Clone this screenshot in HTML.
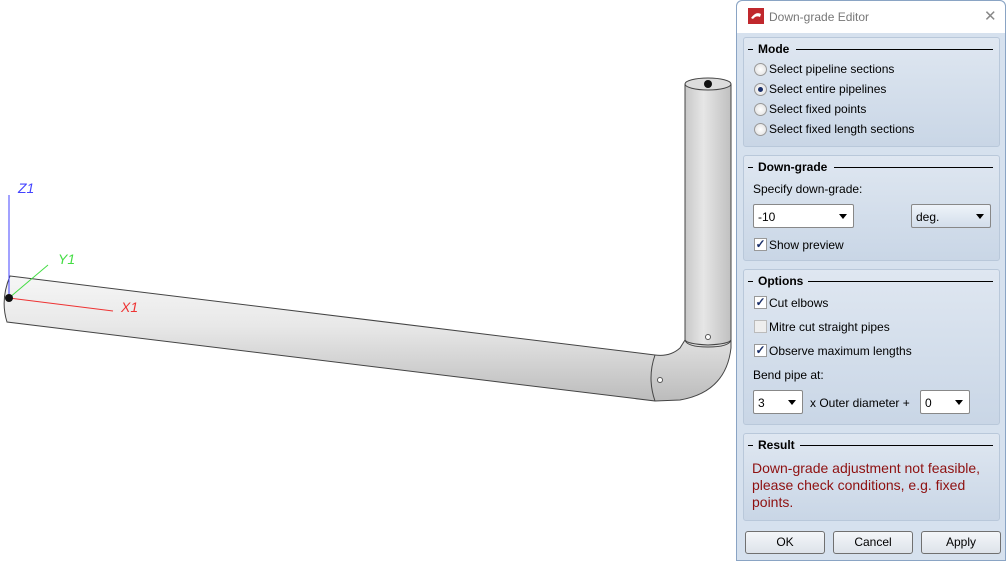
<!DOCTYPE html>
<html><head><style>
*{margin:0;padding:0;box-sizing:border-box}
body{width:1006px;height:561px;background:#fff;font-family:"Liberation Sans",sans-serif;font-size:12px;color:#000;position:relative;overflow:hidden}
.dlg{position:absolute;left:736px;top:0;width:270px;height:561px;background:#d6e1ee;border:1px solid #8aa4c4;border-radius:6px 6px 0 0}
.title{position:absolute;left:0;top:0;width:268px;height:32px;background:#fff;border-radius:6px 6px 0 0}
.title span{position:absolute;left:32px;top:9px;color:#777;font-size:12px}
.grp{position:absolute;left:6px;width:257px;background:linear-gradient(#dfe7f1,#c9d6e6);border:1px solid #b9c8da;border-radius:3px}
.hd{position:absolute;left:4px;top:4px;right:6px;height:14px;font-weight:bold}
.hd:before{content:"";position:absolute;left:0;top:7px;width:5px;border-top:1px solid #000}
.hd b{position:absolute;left:10px;top:0}
.hd i{position:absolute;top:7px;right:0;border-top:1px solid #000}
.t{position:absolute;white-space:nowrap}
.rb{position:absolute;width:13px;height:13px;border-radius:50%;border:1px solid #999;background:radial-gradient(#fff,#ddd)}
.rb.on:after{content:"";position:absolute;left:3px;top:3px;width:5px;height:5px;border-radius:50%;background:#1a2f6a}
.cb{position:absolute;width:13px;height:13px;border:1px solid #999;background:#fff;font-size:12px;line-height:11px;text-align:center;color:#1a2f6a;font-weight:bold}
.sel{position:absolute;height:24px;background:#fff;border:1px solid #888;border-radius:2px}
.sel span{position:absolute;left:4px;top:5px}
.sel:after{content:"";position:absolute;right:6px;top:9px;border:4px solid transparent;border-top:5px solid #000}
.btn{position:absolute;top:530px;width:80px;height:23px;border:1px solid #707070;border-radius:3px;background:linear-gradient(#f4f6f9,#dde3ea);text-align:center;line-height:21px}
</style></head><body>
<svg width="736" height="561" style="position:absolute;left:0;top:0">
<defs>
<linearGradient id="h" x1="0" y1="0" x2="0" y2="1"><stop offset="0" stop-color="#f6f6f6"/><stop offset=".4" stop-color="#e8e8e8"/><stop offset="1" stop-color="#bcbcbc"/></linearGradient>
<linearGradient id="v" x1="0" y1="0" x2="1" y2="0"><stop offset="0" stop-color="#c8c8c8"/><stop offset=".4" stop-color="#e6e6e6"/><stop offset="1" stop-color="#c0c0c0"/></linearGradient>
</defs>
<path d="M10 276 L655 355 Q670 357 680 348 L685 340 L731 340 L731 348 Q726 392 680 400 L655 401 L7 322 Q0 300 10 276 Z" fill="url(#h)" stroke="#444" stroke-width="1"/>
<path d="M685 84 L685 340 Q687 344 708 345 Q729 344 731 340 L731 84 Z" fill="url(#v)" stroke="#444"/>
<path d="M685 340 Q687 347 708 347 Q729 347 731 340" fill="none" stroke="#444"/>
<path d="M655 355 Q647 378 655 401" fill="none" stroke="#444"/>
<ellipse cx="708" cy="84" rx="23" ry="6" fill="#ddd" stroke="#444"/>
<circle cx="708" cy="84" r="4" fill="#111"/>
<circle cx="708" cy="337" r="2.5" fill="#fff" stroke="#555"/>
<circle cx="660" cy="380" r="2.5" fill="#fff" stroke="#555"/>
<line x1="9" y1="195" x2="9" y2="298" stroke="#4444ff"/>
<line x1="9" y1="298" x2="48" y2="265" stroke="#44dd44"/>
<line x1="9" y1="298" x2="113" y2="311" stroke="#ee3333"/>
<circle cx="9" cy="298" r="4" fill="#111"/>
<text x="18" y="193" fill="#4444ff" font-style="italic" font-size="14" font-family="Liberation Sans">Z1</text>
<text x="58" y="264" fill="#44dd44" font-style="italic" font-size="14" font-family="Liberation Sans">Y1</text>
<text x="121" y="312" fill="#ee3333" font-style="italic" font-size="14" font-family="Liberation Sans">X1</text>
</svg>
<div class="dlg">
<div class="title"><svg width="16" height="16" style="position:absolute;left:11px;top:7px"><rect width="16" height="16" fill="#c0282d"/><path d="M3 10 Q8 3 13 6 L12 9 Q8 7 5 11Z" fill="#fff"/></svg><span>Down-grade Editor</span><span style="left:247px;top:6px;font-size:15px;color:#888">✕</span></div>
<div class="grp" style="top:36px;height:110px"><div class="hd"><b>Mode</b><i style="left:48px"></i></div>
<div class="rb" style="left:10px;top:25px"></div><div class="t" style="left:25px;top:24px">Select pipeline sections</div>
<div class="rb on" style="left:10px;top:45px"></div><div class="t" style="left:25px;top:44px">Select entire pipelines</div>
<div class="rb" style="left:10px;top:65px"></div><div class="t" style="left:25px;top:64px">Select fixed points</div>
<div class="rb" style="left:10px;top:85px"></div><div class="t" style="left:25px;top:84px">Select fixed length sections</div></div>
<div class="grp" style="top:154px;height:106px"><div class="hd"><b>Down-grade</b><i style="left:86px"></i></div>
<div class="t" style="left:9px;top:26px">Specify down-grade:</div>
<div class="sel" style="left:9px;top:48px;width:101px"><span>-10</span></div>
<div class="sel" style="left:167px;top:48px;width:80px;background:linear-gradient(#eef3f9,#d3deeb)"><span>deg.</span></div>
<div class="cb" style="left:10px;top:82px">✓</div><div class="t" style="left:25px;top:82px">Show preview</div></div>
<div class="grp" style="top:268px;height:156px"><div class="hd"><b>Options</b><i style="left:60px"></i></div>
<div class="cb" style="left:10px;top:26px">✓</div><div class="t" style="left:25px;top:26px">Cut elbows</div>
<div class="cb" style="left:10px;top:50px;background:#eee;border-color:#bbb"></div><div class="t" style="left:25px;top:50px">Mitre cut straight pipes</div>
<div class="cb" style="left:10px;top:74px">✓</div><div class="t" style="left:25px;top:74px">Observe maximum lengths</div>
<div class="t" style="left:9px;top:98px">Bend pipe at:</div>
<div class="sel" style="left:9px;top:120px;width:50px"><span>3</span></div>
<div class="t" style="left:66px;top:126px">x Outer diameter +</div>
<div class="sel" style="left:176px;top:120px;width:50px"><span>0</span></div></div>
<div class="grp" style="top:432px;height:88px"><div class="hd"><b>Result</b><i style="left:52px"></i></div>
<div class="t" style="left:8px;top:26px;color:#8e1010;font-size:14px;line-height:17px">Down-grade adjustment not feasible,<br>please check conditions, e.g. fixed<br>points.</div></div>
<div class="btn" style="left:8px">OK</div>
<div class="btn" style="left:96px">Cancel</div>
<div class="btn" style="left:184px">Apply</div>
</div>
</body></html>
